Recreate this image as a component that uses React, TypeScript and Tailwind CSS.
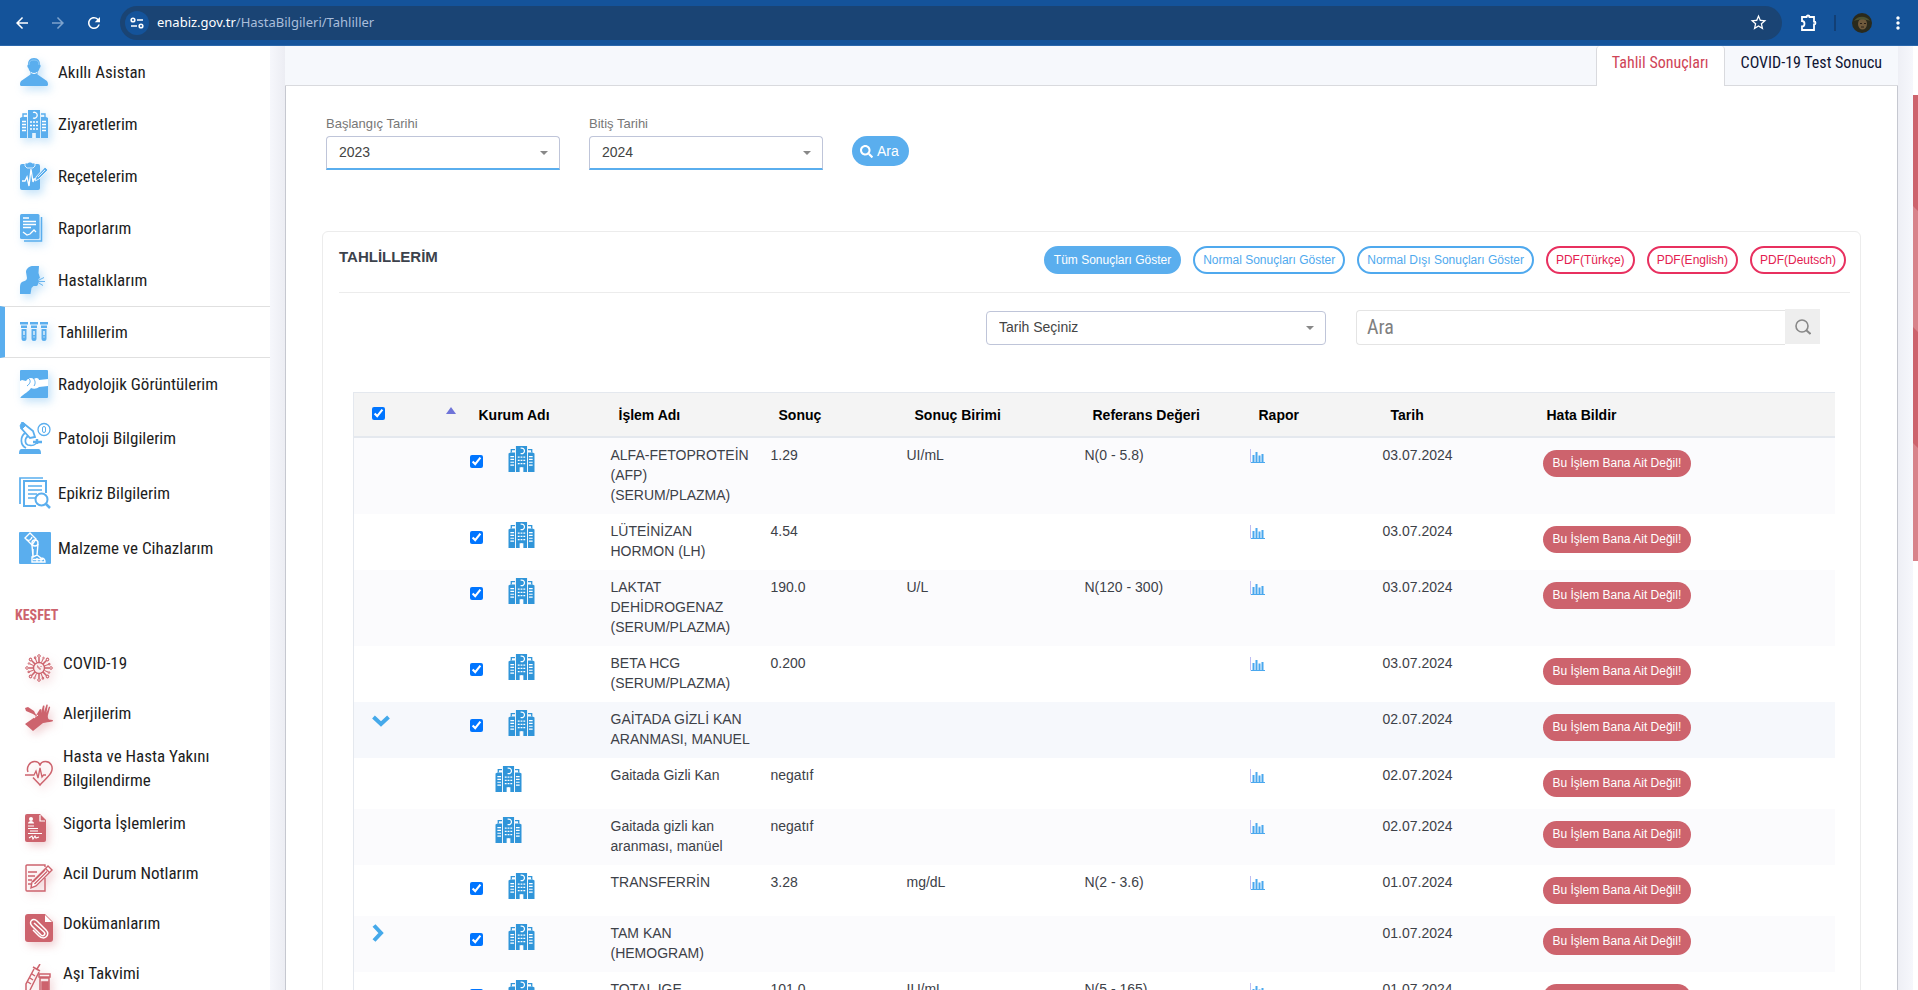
import type { ReactNode } from "react";
import { FaSearch } from "react-icons/fa";
import {
  MdArrowBack,
  MdArrowForward,
  MdMoreVert,
  MdRefresh,
  MdStarOutline,
} from "react-icons/md";

type IconProps = { className?: string };

const HospitalIcon = ({ className }: IconProps) => (
  <svg viewBox="0 0 28 28" className={className} fill="currentColor">
    <path d="M8 0h12v28h-4v-5h-4v5H8z" />
    <path d="M0 8l2-1h5v21H0zM21 7h5l2 1v20h-7z" />
    <path
      d="M3 7V4h4M25 7V4h-4"
      fill="none"
      stroke="currentColor"
      strokeWidth="1.4"
    />
    <g fill="none" stroke="#fff" strokeWidth="1.3">
      <path d="M13 2.500a3 3 0 1 1 0 5.500" />
      <path d="M10 12h2M13 12h2M16 12h2M10 15.500h2M13 15.500h2M16 15.500h2M10 19h2M13 19h2M16 19h2" />
      <path d="M2 11.500h4M2 14.500h4M2 17.500h4M2 20.500h4M22 11.500h4M22 14.500h4M22 17.500h4M22 20.500h4" />
      <path d="M14 23v5" strokeWidth="1" />
    </g>
  </svg>
);

const PersonIcon = () => (
  <svg viewBox="0 0 28 28" className="size-7" fill="#5aaeee">
    <path d="M14 0c4.500 0 6 3 6 6.500 1 .5.800 3-.300 3.500-.5 2-1.500 3.300-2.200 4v2.500l8 5.500c1.800 1 2.500 2 2.500 4.500 0 .800-.5 1.500-1.500 1.500h-25C.5 28 0 27.300 0 26.500c0-2.500.700-3.500 2.500-4.500l8-5.500V14c-.700-.700-1.700-2-2.200-4-1.100-.5-1.300-3-.300-3.500C8 3 9.500 0 14 0z" />
    <path d="M9 7C9 3.500 10.500 2 14 2s5 1.500 5 5" fill="none" stroke="#8cc8f5" />
    <path d="M11 14.500c2 1.300 4 1.300 6 0" fill="none" stroke="#fff" />
  </svg>
);

const ClipboardPulseIcon = () => (
  <svg viewBox="0 0 28 28" className="size-7" fill="#5aaeee">
    <rect y="2" width="20" height="26" rx="2" />
    <path d="M5 1h3c.5-1.300 3.500-1.300 4 0h3v3l-2 2H7L5 4z" stroke="#fff" strokeWidth=".8" />
    <path d="M2 19h3l2-4 2 9 2-17 2 13 1-3h2" fill="none" stroke="#fff" strokeWidth="1.300" />
    <path d="M25 5l3 3-9 9-4 2 1-4z" stroke="#fff" strokeWidth=".8" />
    <path d="M18 15l7-7" stroke="#fff" strokeWidth=".8" />
  </svg>
);

const ReportIcon = () => (
  <svg viewBox="0 0 28 28" className="size-7">
    <path d="M21.500 3v24H4" fill="none" stroke="#5aaeee" strokeWidth="1.500" />
    <rect width="19.500" height="25" rx="1.500" fill="#5aaeee" />
    <path
      d="M3 4h6M3 7.500h13M3 10.500h13M3 13.500h8M3 18l4 3 3-1 4-4 2 2"
      fill="none"
      stroke="#fff"
      strokeWidth="1.300"
    />
  </svg>
);

const CoughIcon = () => (
  <svg viewBox="0 0 28 28" className="size-7" fill="#5aaeee">
    <path d="M12 0c3-.5 6-.5 7 0l-.5 7 1.500 5-1.500 1-.5 5c0 1.500-1 2-2.500 2h-2l-2 2-1 6H0v-7c0-3 1-5 3-5.500 2.500-.7 4-1.500 4-3.500L6 6C6 3 9 .5 12 0z" />
    <path d="M18 14.500l6-3M18 15.500l7 0M18 16.500l5 3" stroke="#5aaeee" strokeWidth=".9" />
  </svg>
);

const TubesIcon = () => (
  <svg viewBox="0 0 28 28" className="size-7" fill="#5aaeee">
    {[0, 10, 20].map((x) => (
      <g key={x} transform={`translate(${x} 4)`}>
        <path d="M0 0h8v2.500H0zM1 3.500h6V6H1zM1.500 7h5v9.500a2.500 2.500 0 0 1-5 0z" />
        <path d="M4 9v4M3.500 15h1" stroke="#fff" strokeWidth="1.200" />
      </g>
    ))}
  </svg>
);

const JointIcon = () => (
  <svg viewBox="0 0 28 28" className="size-7">
    <rect width="28" height="28" rx="1" fill="#5aaeee" />
    <path
      d="M0 11l2-1 4 1c2-3 5-4 8-2 2-2 5-1 5 1l9-1v7l-9 1c-2 2-6 2-8 1-2 4-7 5-11 10z"
      fill="#fff"
    />
    <path d="M8 8c3 2 3 5-1 8M13 8c2 2 3 5 1 8" fill="none" stroke="#5aaeee" strokeWidth="1" />
  </svg>
);

const MicroscopeIcon = () => (
  <svg viewBox="0 0 32 32" className="size-8" fill="none" stroke="#5aaeee">
    <path d="M0 32c0-4 1-5 3-5h16c2 0 3 1 3 5z" fill="#5aaeee" stroke="none" />
    <path d="M4 1l10 8 2 6-5 1-9-10z" strokeWidth="1.800" />
    <path d="M3 0l4 3-4 4-2-3z" fill="#5aaeee" />
    <path d="M6 11c-5 4-5 12 1 15M9 14c-4 3-3 8 0 9 4 1 8 0 9-3" strokeWidth="1.700" />
    <path d="M14 20h9M18 17v5" strokeWidth="2.500" />
    <circle cx="25" cy="7.500" r="6" strokeWidth="1.300" />
    <rect x="23.500" y="4.500" width="3" height="6" rx="1.500" />
  </svg>
);

const DocumentSearchIcon = () => (
  <svg viewBox="0 0 32 32" className="size-8" fill="none" stroke="#5aaeee">
    <path d="M24 1H1v26" strokeWidth="1.700" />
    <path d="M17 29H5V4h22v12" strokeWidth="2" />
    <path d="M9 9h14M9 13h14M9 17h9M9 21h7" strokeWidth="1.700" />
    <circle cx="22.500" cy="22.500" r="6" strokeWidth="2" />
    <path d="M27 27l4 4" strokeWidth="2.500" />
  </svg>
);

const ProsthesisIcon = () => (
  <svg viewBox="0 0 32 32" className="size-8">
    <rect width="32" height="32" rx="1" fill="#5aaeee" />
    <g fill="none" stroke="#fff" strokeWidth="1.400">
      <path d="M6 6l5-5 6 6-4 6z" />
      <path d="M8 8c2 1 4 0 5-3" />
      <circle cx="16" cy="11" r="3" />
      <path d="M13 13l1 12M19 12l-1 11M14 17v7M14 25h-1v5h13c0-3-2-4-4-4l-4-3zM14 27.500h10M18 26v4M22 26v4" />
    </g>
  </svg>
);

const VirusIcon = () => (
  <svg viewBox="0 0 28 28" className="size-7" fill="none" stroke="#cd636d">
    <circle cx="14" cy="14" r="5.500" strokeWidth="1.400" />
    <path d="M12 12h1v2h2v2M16 12v1" />
    {[0, 45, 90, 135, 180, 225, 270, 315].map((a) => (
      <g key={a} transform={`rotate(${a} 14 14)`}>
        <path d="M14 8.500V3.500" strokeWidth="1.500" />
        <circle cx="14" cy="2" r="1.300" />
        <path d="M16.500 8.500l1.500-3.500" />
        <circle cx="18.500" cy="4" r=".8" />
      </g>
    ))}
  </svg>
);

const AllergyIcon = () => (
  <svg viewBox="0 0 28 28" className="size-7" fill="#cd636d">
    <path d="M0 20l10-7 5-8 1.500.5L16 9l2-7.500 1.500.2L19 8l2.500-7.500 1.300.3L21.500 9 24 2.500l1.200.4L23 11c-.5 2 0 4 1 4.500l3.500.5c.8.500.5 1.500-.5 1.600-3 .5-7 1-9 1.500L8 27z" />
    <path d="M0 4l3-1 6 4 1 2 2.500 4L8 10 1 7z" />
    <path d="M9 14l4-3" stroke="#fff" strokeWidth="1" strokeDasharray="2 1" />
  </svg>
);

const HeartPulseIcon = () => (
  <svg viewBox="0 0 28 28" className="size-7" fill="none" stroke="#cd636d" strokeWidth="1.500">
    <path d="M3 13C1 8 5 2.500 9.500 2.500c3 0 5 1.500 5.500 4 .5-2.500 3-4 5.500-4 5 0 8 5 6 10C25 17 18 22 15 26c-2-2.500-5-5-7-7.500" />
    <path d="M0 16h9l2-4 2 7 2-10 2 9 1.500-2H21" strokeWidth="1.300" />
  </svg>
);

const InsuranceIcon = () => (
  <svg viewBox="0 0 28 28" className="size-7">
    <path d="M2 0h13l6 6v20a2 2 0 0 1-2 2H2a2 2 0 0 1-2-2V2a2 2 0 0 1 2-2z" fill="#cd636d" />
    <path d="M15 1v6h5" fill="none" stroke="#fff" strokeWidth="1.200" />
    <circle cx="6" cy="5" r="2" fill="#fff" />
    <path d="M3 9.500c0-3.500 6-3.500 6 0z" fill="#fff" />
    <path
      d="M3 12h6M3 14.500h10M5 17h8M3 19.500h14M4 24l3-2 1 3 2-3 1 2 3-1"
      fill="none"
      stroke="#fff"
      strokeWidth="1.100"
    />
  </svg>
);

const NoteIcon = () => (
  <svg viewBox="0 0 28 28" className="size-7" fill="none" stroke="#cd636d" strokeWidth="1.400">
    <path d="M20 3V1H2a1 1 0 0 0-1 1v24a1 1 0 0 0 1 1h18V14" />
    <path d="M3 8h9M3 12h7M3 16h4M3 20h3" />
    <path d="M23 2l4 4L11 22l-5 2 1-6z" fill="#fff" />
    <path d="M20.500 4.500l4 4M9.500 20L22 7.500M8 18L20 6" />
  </svg>
);

const AttachmentIcon = () => (
  <svg viewBox="0 0 28 28" className="size-7">
    <path d="M3 0h17l8 8v17a3 3 0 0 1-3 3H3a3 3 0 0 1-3-3V3a3 3 0 0 1 3-3z" fill="#cd636d" />
    <path d="M20 1v7h7z" fill="#fff" />
    <path
      d="M9 9l10 9c2 2-.5 5-3 3L7 12c-4-4 1-9 5-5l9 9c5 5-2 11-7 6l-6-6"
      fill="none"
      stroke="#fff"
      strokeWidth="1.500"
    />
  </svg>
);

const VaccineIcon = () => (
  <svg viewBox="0 0 28 28" className="size-7" fill="none" stroke="#cd636d" strokeWidth="1.500">
    <path d="M15 0l-3 5M8 3l7 4M9 5L1 20v8M14 8L5 26M7 10l3 2M5 14l3 2M3 18l3 2" />
    <path d="M14 10h11v3H14zM15 14h9v14h-9z" />
    <path d="M17 18h6v8h-6z" fill="#cd636d" />
  </svg>
);

const ChartIcon = () => (
  <svg viewBox="0 0 15 14" className="h-3.5 w-[15px]">
    <path d="M.5 0v13.500" stroke="#bdbdf2" />
    <path d="M1 13.500h14" stroke="#4aa8ee" />
    <path d="M3.500 6v7M6.500 3v10M9.500 6.500V13M12.500 5v8" stroke="#4aa8ee" strokeWidth="2" />
  </svg>
);

const PuzzleIcon = () => (
  <svg viewBox="0 0 18 18" className="size-[18px]" fill="none" stroke="currentColor" strokeWidth="1.800">
    <path d="M2 3h4.500a1.500 1.500 0 0 1 3 0H14v4.500a1.500 1.500 0 0 1 0 3V16H2v-3.500c3.300 0 3.300-5.500 0-5.500z" />
  </svg>
);

const Chevron = ({ open }: { open: boolean }) =>
  open ? (
    <svg viewBox="0 0 18 12" className="mt-[5px] h-3 w-[18px]" fill="none" stroke="#45a9ea" strokeWidth="4">
      <path d="M1.500 2L9 9l7.500-7" />
    </svg>
  ) : (
    <svg viewBox="0 0 12 18" className="h-[18px] w-3" fill="none" stroke="#45a9ea" strokeWidth="4">
      <path d="M2 1.500L9 9l-7 7.500" />
    </svg>
  );

type MenuItem = { label: string; icon: ReactNode; active?: boolean; tall?: boolean };

const menu: MenuItem[] = [
  { label: "Akıllı Asistan", icon: <PersonIcon /> },
  { label: "Ziyaretlerim", icon: <HospitalIcon className="size-7 text-[#5aaeee]" /> },
  { label: "Reçetelerim", icon: <ClipboardPulseIcon /> },
  { label: "Raporlarım", icon: <ReportIcon /> },
  { label: "Hastalıklarım", icon: <CoughIcon /> },
  { label: "Tahlillerim", icon: <TubesIcon />, active: true },
  { label: "Radyolojik Görüntülerim", icon: <JointIcon /> },
  { label: "Patoloji Bilgilerim", icon: <MicroscopeIcon />, tall: true },
  { label: "Epikriz Bilgilerim", icon: <DocumentSearchIcon />, tall: true },
  { label: "Malzeme ve Cihazlarım", icon: <ProsthesisIcon />, tall: true },
];

const discover: MenuItem[] = [
  { label: "COVID-19", icon: <VirusIcon /> },
  { label: "Alerjilerim", icon: <AllergyIcon /> },
  { label: "Hasta ve Hasta Yakını Bilgilendirme", icon: <HeartPulseIcon /> },
  { label: "Sigorta İşlemlerim", icon: <InsuranceIcon /> },
  { label: "Acil Durum Notlarım", icon: <NoteIcon /> },
  { label: "Dokümanlarım", icon: <AttachmentIcon /> },
  { label: "Aşı Takvimi", icon: <VaccineIcon /> },
];

type Result = {
  name: string;
  value?: string;
  unit?: string;
  reference?: string;
  date: string;
  group?: "open" | "closed";
  child?: boolean;
};

const results: Result[] = [
  { name: "ALFA-FETOPROTEİN (AFP) (SERUM/PLAZMA)", value: "1.29", unit: "UI/mL", reference: "N(0 - 5.8)", date: "03.07.2024" },
  { name: "LÜTEİNİZAN HORMON (LH)", value: "4.54", date: "03.07.2024" },
  { name: "LAKTAT DEHİDROGENAZ (SERUM/PLAZMA)", value: "190.0", unit: "U/L", reference: "N(120 - 300)", date: "03.07.2024" },
  { name: "BETA HCG (SERUM/PLAZMA)", value: "0.200", date: "03.07.2024" },
  { name: "GAİTADA GİZLİ KAN ARANMASI, MANUEL", date: "02.07.2024", group: "open" },
  { name: "Gaitada Gizli Kan", value: "negatıf", date: "02.07.2024", child: true },
  { name: "Gaitada gizli kan aranması, manüel", value: "negatıf", date: "02.07.2024", child: true },
  { name: "TRANSFERRİN", value: "3.28", unit: "mg/dL", reference: "N(2 - 3.6)", date: "01.07.2024" },
  { name: "TAM KAN (HEMOGRAM)", date: "01.07.2024", group: "closed" },
  { name: "TOTAL IGE", value: "101.0", unit: "IU/mL", reference: "N(5 - 165)", date: "01.07.2024" },
];

const BrowserBar = () => (
  <header className="flex h-[46px] shrink-0 items-center border-b border-[#2b67ab] bg-[#14539a] text-white">
    <div className="flex items-center gap-[18px] px-[13px]">
      <button aria-label="Geri"><MdArrowBack size={18} /></button>
      <button aria-label="İleri" className="text-[#7ea3cd]"><MdArrowForward size={18} /></button>
      <button aria-label="Yenile"><MdRefresh size={18} /></button>
    </div>
    <div className="ml-1 flex h-[34px] flex-1 items-center rounded-full bg-[#1a4474] pl-[5px] pr-3.5">
      <button aria-label="Site bilgileri" className="flex size-6 items-center justify-center rounded-full bg-[#14539a]">
        <svg viewBox="0 0 14 12" className="h-3 w-3.5" fill="none" stroke="#fff" strokeWidth="1.600">
          <circle cx="3" cy="3" r="1.800" />
          <path d="M7 3h6M1 9h6" />
          <circle cx="11" cy="9" r="1.800" />
        </svg>
      </button>
      <span className="ml-2 flex-1 font-['Noto_Sans',sans-serif] text-[13px] text-[#a9bedb]">
        <span className="text-white">enabiz.gov.tr</span>/HastaBilgileri/Tahliller
      </span>
      <button aria-label="Yer işareti"><MdStarOutline size={19} /></button>
    </div>
    <div className="flex items-center pl-[18px] pr-2.5">
      <button aria-label="Uzantılar"><PuzzleIcon /></button>
      <span className="ml-4 h-4 w-0.5 bg-[#123f75]" />
      <button aria-label="Profil" className="ml-4">
        <svg viewBox="0 0 20 20" className="size-5">
          <circle cx="10" cy="10" r="10" fill="#2a2a1c" />
          <ellipse cx="10.500" cy="11" rx="4.500" ry="5.500" fill="#6f5a3c" />
          <path d="M2 8c3-5 12-6 16 0-5-2-11-2-16 0z" fill="#4c5130" />
          <path d="M8 10.500h2M12 10.500h2M9 14h3" stroke="#2a2018" />
        </svg>
      </button>
      <button aria-label="Menü" className="ml-4"><MdMoreVert size={20} /></button>
    </div>
  </header>
);

const Sidebar = () => (
  <nav className="w-[270px] shrink-0 bg-white font-['Roboto_Condensed','Liberation_Sans_Narrow',sans-serif] text-[17px] leading-6 text-[#1d1d1d]">
    <ul>
      {menu.map(({ label, icon, active, tall }) => (
        <li key={label}>
          <a
            href="#"
            className={`flex items-center border-l-[5px] ${
              active ? "border-y border-l-[#5aaeee] border-y-[#e0e0e0]" : "border-l-transparent"
            } ${tall ? "h-[55px] pl-3.5" : "h-[52px] pl-[15px]"}`}
          >
            <span
              className={
                tall ? "mr-[7px]" : "mr-2.5 drop-shadow-[3px_4px_4px_rgba(90,174,238,0.35)]"
              }
            >
              {icon}
            </span>
            {label}
          </a>
        </li>
      ))}
    </ul>
    <h2 className="mt-7 px-[15px] text-sm leading-6 font-bold text-[#cd636d]">KEŞFET</h2>
    <ul className="mt-[11px]">
      {discover.map(({ label, icon }) => (
        <li key={label}>
          <a href="#" className="flex min-h-[50px] items-center gap-2.5 py-1.5 pl-[25px] pr-10">
            <span className="-mb-2.5 drop-shadow-[3px_4px_4px_rgba(205,99,109,0.3)]">{icon}</span>
            <span className="flex-1">{label}</span>
          </a>
        </li>
      ))}
    </ul>
  </nav>
);

type DropdownProps = { id: string; value: string; label?: string; className?: string };

const Dropdown = ({ id, value, label, className = "" }: DropdownProps) => (
  <div className="relative">
    <select
      id={id}
      aria-label={label}
      className={`h-[34px] w-full appearance-none rounded border border-[#bfc5d9] bg-white px-3 pb-0.5 text-sm text-[#444] ${className}`}
    >
      <option>{value}</option>
    </select>
    <span className="pointer-events-none absolute right-3 top-[15px] border-x-4 border-t-4 border-x-transparent border-t-[#888]" />
  </div>
);

const Filters = () => (
  <form className="flex items-end gap-[29px] px-10 pt-7">
    <div className="w-[234px]">
      <label htmlFor="start" className="mb-0.5 block text-[13px] leading-5 text-[#777]">Başlangıç Tarihi</label>
      <Dropdown id="start" value="2023" className="rounded-b-none border-b-2 border-b-[#5aaeee]" />
    </div>
    <div className="w-[234px]">
      <label htmlFor="end" className="mb-0.5 block text-[13px] leading-5 text-[#777]">Bitiş Tarihi</label>
      <Dropdown id="end" value="2024" className="rounded-b-none border-b-2 border-b-[#5aaeee]" />
    </div>
    <button type="button" className="mb-1 flex h-[30px] items-center gap-1 rounded-full bg-[#5aaeee] pl-2 pr-2.5 text-sm text-white">
      <FaSearch size={13} /> Ara
    </button>
  </form>
);

const blue = "border-[#4fa9ee] text-[#4fa9ee]";
const red = "border-[#e8305f] text-[#e3204f]";

const actions = [
  { label: "Tüm Sonuçları Göster", tone: "border-[#5aaeee] bg-[#5aaeee] text-white" },
  { label: "Normal Sonuçları Göster", tone: blue },
  { label: "Normal Dışı Sonuçları Göster", tone: blue },
  { label: "PDF(Türkçe)", tone: red },
  { label: "PDF(English)", tone: red },
  { label: "PDF(Deutsch)", tone: red },
];

const headers = ["İşlem Adı", "Sonuç", "Sonuç Birimi", "Referans Değeri", "Rapor", "Tarih"];

const cell = "px-2 pt-[7px] pb-[9px]";

const ResultsTable = () => (
  <table className="w-full table-fixed border-l border-[#e4e8ee] text-left text-sm leading-5 text-[#3d4148]">
    <colgroup>
      <col className="w-[108px]" />
      <col className="w-[141px]" />
      <col className="w-[160px]" />
      <col className="w-[136px]" />
      <col className="w-[178px]" />
      <col className="w-[166px]" />
      <col className="w-[132px]" />
      <col className="w-[160px]" />
      <col />
    </colgroup>
    <thead>
      <tr className="h-11 border-b-2 border-t border-[#e4e8ee] bg-[#f4f4f4] text-black">
        <th className="pb-0.5 pl-[18px] pr-1.5">
          <div className="flex justify-between">
            <input type="checkbox" defaultChecked aria-label="Tümünü seç" className="size-[13px]" />
            <span className="h-0 border-x-[5px] border-b-[7px] border-x-transparent border-b-[#6f74d8]" />
          </div>
        </th>
        <th className="pl-[17px] pt-0.5">Kurum Adı</th>
        {headers.map((h) => (
          <th key={h} className="pl-4 pt-0.5">{h}</th>
        ))}
        <th className="pl-3 pt-0.5">Hata Bildir</th>
      </tr>
    </thead>
    <tbody>
      {results.map((r) => (
        <tr
          key={r.name}
          className={`align-top ${r.group === "open" ? "bg-[#f6f8fc]" : "odd:bg-[#fbfbfd] even:bg-white"}`}
        >
          <td className="py-2 pl-[18px]">
            {r.group && (
              <button aria-label="Detay" className="block">
                <Chevron open={r.group === "open"} />
              </button>
            )}
          </td>
          <td className="p-2">
            <div className={`flex gap-[25px] ${r.child ? "pl-[25px]" : ""}`}>
              {!r.child && (
                <input type="checkbox" defaultChecked aria-label={r.name} className="mt-[9px] size-[13px]" />
              )}
              <HospitalIcon className="h-[26px] w-[27px] text-[#3095d9]" />
            </div>
          </td>
          <td className={cell}>{r.name}</td>
          <td className={cell}>{r.value}</td>
          <td className={cell}>{r.unit}</td>
          <td className={cell}>{r.reference}</td>
          <td className="py-2 pl-[7px]">
            {r.value && (
              <button aria-label="Grafik" className="mt-[3px] block">
                <ChartIcon />
              </button>
            )}
          </td>
          <td className={cell}>{r.date}</td>
          <td className="p-2">
            <button className="my-1 block h-[27px] whitespace-nowrap rounded-full bg-[#cd636d] px-2.5 text-xs text-white">
              Bu İşlem Bana Ait Değil!
            </button>
          </td>
        </tr>
      ))}
    </tbody>
  </table>
);

const Results = () => (
  <section className="mx-9 mt-[61px] rounded-md border border-[#ececec] pb-10 pl-4 pr-[15px]">
    <div className="-mr-[5px] flex h-[61px] items-start justify-between border-b border-[#ececec] pt-3.5">
      <h1 className="text-[15px] font-bold leading-[22px] text-[#3c424c]">TAHLİLLERİM</h1>
      <div className="mr-1 flex gap-3">
        {actions.map(({ label, tone }) => (
          <button key={label} className={`h-7 whitespace-nowrap rounded-full border-2 px-2 text-xs ${tone}`}>
            {label}
          </button>
        ))}
      </div>
    </div>
    <div className="mr-[25px] mt-4 flex justify-end gap-[30px]">
      <div className="w-[340px] pt-0.5">
        <Dropdown id="date" label="Tarih Seçiniz" value="Tarih Seçiniz" />
      </div>
      <div className="flex w-[464px]">
        <input
          type="search"
          placeholder="Ara"
          aria-label="Ara"
          className="mt-px h-[35px] min-w-0 flex-1 rounded-l border border-r-0 border-[#e4e4e4] px-2.5 pb-0.5 font-['Roboto_Condensed','Liberation_Sans_Narrow',sans-serif] text-xl placeholder:text-[#808080]"
        />
        <button aria-label="Ara" className="flex size-[35px] items-center justify-center bg-[#eee] text-[#888]">
          <svg viewBox="0 0 16 16" className="size-4" fill="none" stroke="currentColor" strokeWidth="1.600">
            <circle cx="7" cy="7" r="6" />
            <path d="M11 11l4.500 4" strokeWidth="2" />
          </svg>
        </button>
      </div>
    </div>
    <div className="ml-3.5 mr-2.5 mt-[47px]">
      <ResultsTable />
    </div>
  </section>
);

// striped ribbon at the window edge
const Ribbon = () => (
  <svg viewBox="0 0 5 466" className="mt-[49px] h-[466px] w-[5px] shrink-0">
    <rect width="5" height="466" fill="#d8838b" />
    <path d="M0 0h5v116l-5-5zM0 232l5 5v116l-5-5z" fill="#cd636d" />
  </svg>
);

const tab = "flex items-start pt-[5px]";

export default function App() {
  return (
    <div className="flex h-screen flex-col overflow-hidden bg-white font-['Liberation_Sans',Arial,sans-serif]">
      <BrowserBar />
      <div className="flex min-h-0 flex-1">
        <Sidebar />
        <div className="w-[15px] shrink-0 bg-linear-to-r from-[#f6f7fc] to-[#ecedf3]" />
        <main className="min-w-0 flex-1">
          <div className="flex h-10 justify-end border-b border-[#d9dade] bg-[#f6f8fc] font-['Roboto_Condensed','Liberation_Sans_Narrow',sans-serif] text-base leading-6">
            <a href="#" className={`${tab} -mb-px rounded-t border-x border-[#d9dade] bg-white px-[15px] text-[#cf4457]`}>
              Tahlil Sonuçları
            </a>
            <a href="#" className={`${tab} px-4 text-[#0f1433]`}>COVID-19 Test Sonucu</a>
          </div>
          <div className="border-x border-[#c6c8d0]">
            <Filters />
            <Results />
          </div>
        </main>
        <div className="w-[15px] shrink-0 bg-linear-to-r from-[#eeeff5] to-[#f6f7fc]" />
        <Ribbon />
      </div>
    </div>
  );
}
